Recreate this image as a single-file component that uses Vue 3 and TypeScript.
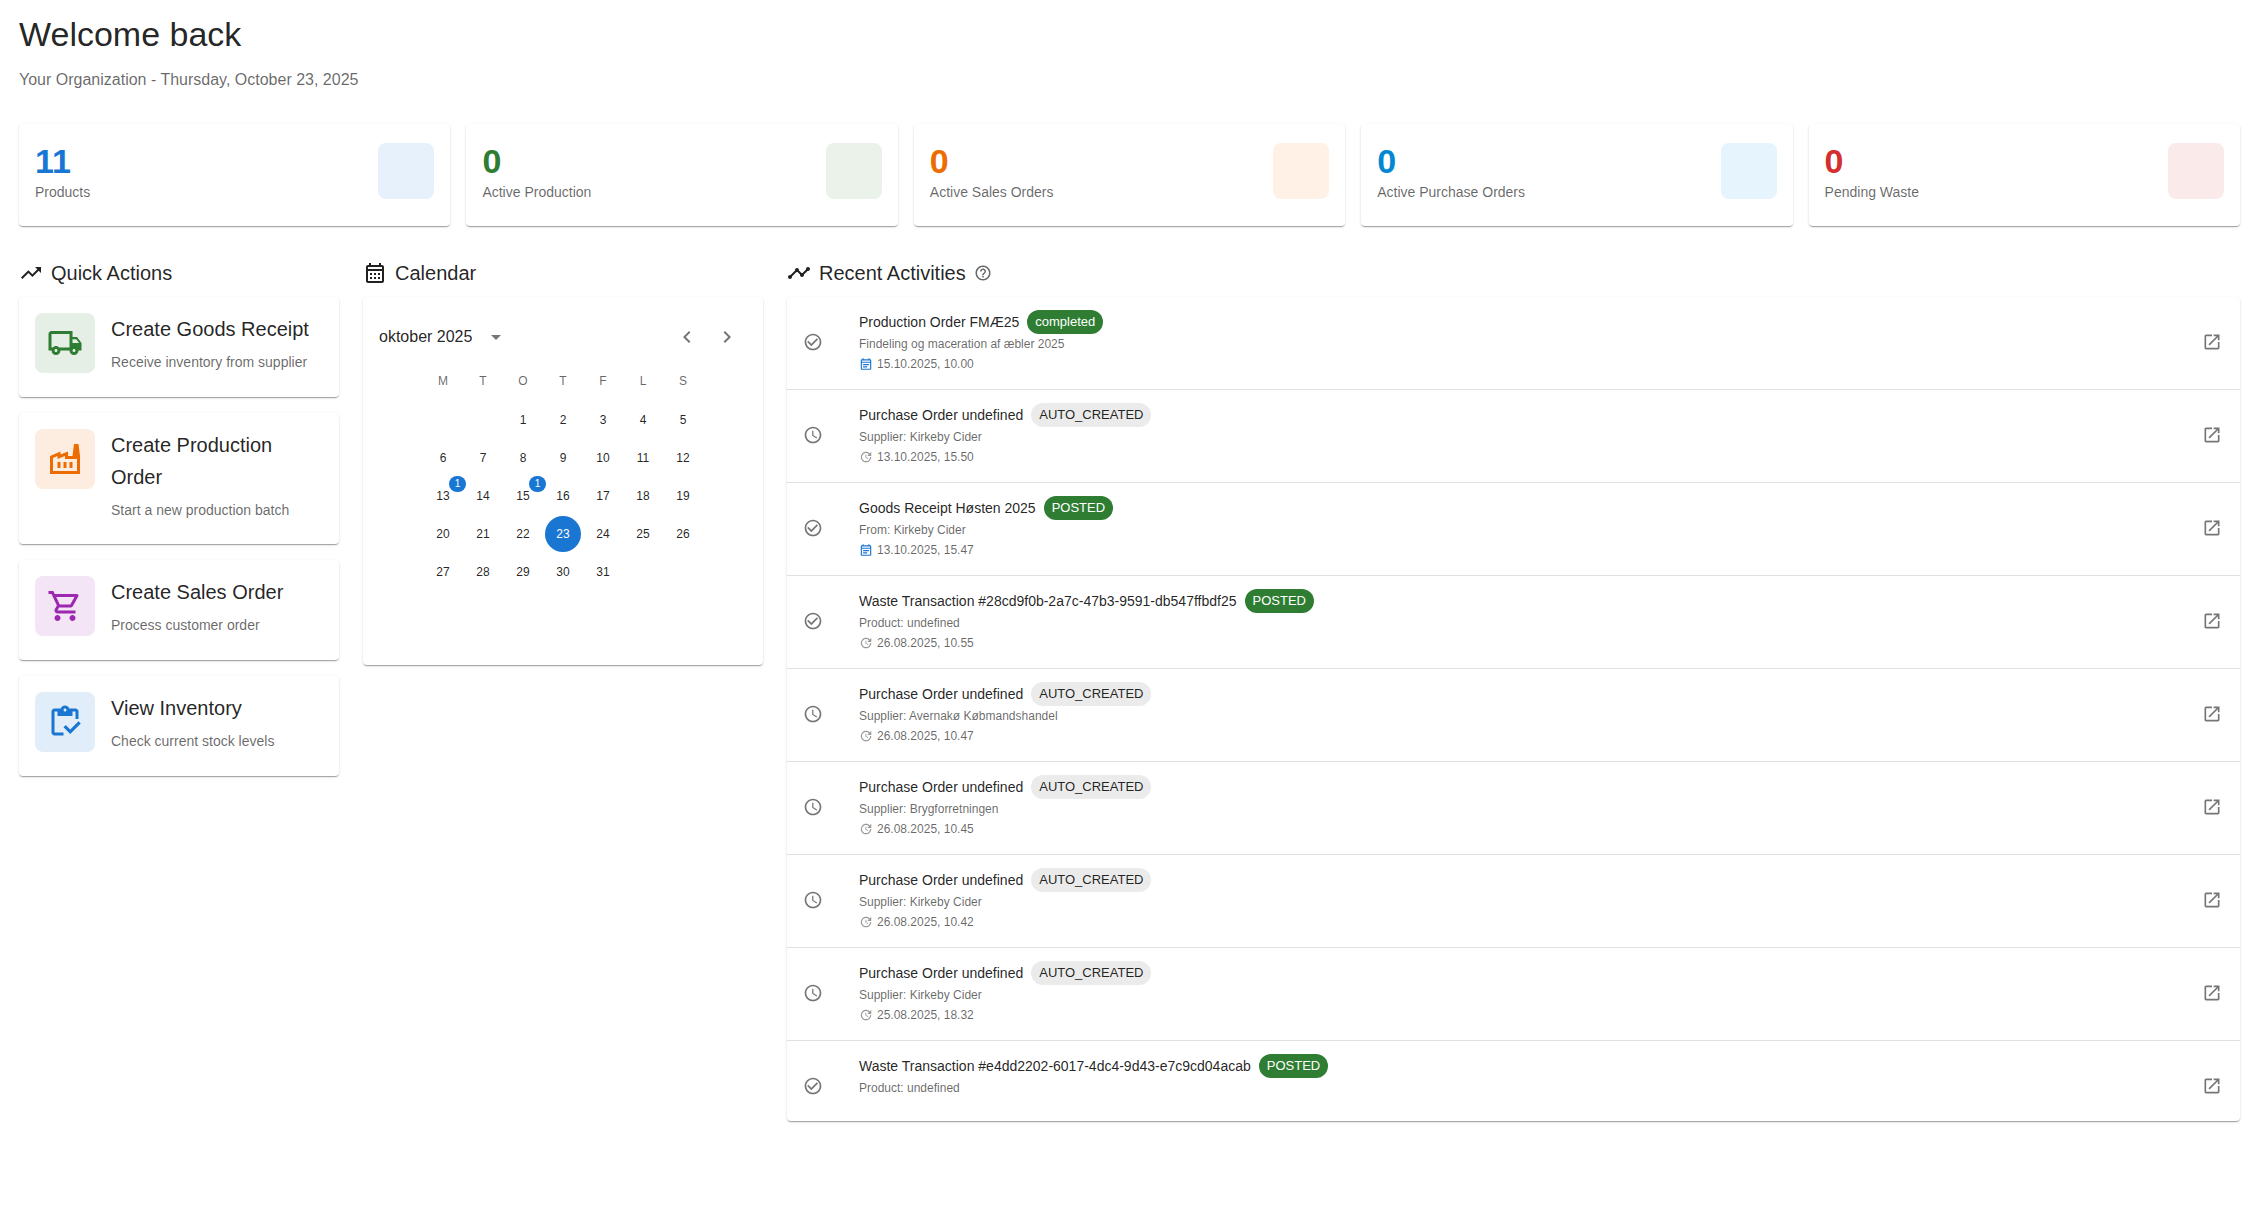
<script setup lang="ts">
interface Stat { value: number; label: string; tone: string }
interface Action { title: string; text: string; tone: string; icon: string }
interface Activity {
  title: string
  status: string
  detail: string
  date?: string
  scheduled?: boolean
}

const icons: Record<string, string> = {
  trending: 'm16 6 2.29 2.29-4.88 4.88-4-4L2 16.59 3.41 18l6-6 4 4 6.3-6.29L22 12V6z',
  calendar: 'M19 4h-1V2h-2v2H8V2H6v2H5c-1.11 0-1.99.9-1.99 2L3 20c0 1.1.89 2 2 2h14c1.1 0 2-.9 2-2V6c0-1.1-.9-2-2-2zm0 16H5V10h14v10zm0-12H5V6h14v2zM9 14H7v-2h2v2zm4 0h-2v-2h2v2zm4 0h-2v-2h2v2zm-8 4H7v-2h2v2zm4 0h-2v-2h2v2zm4 0h-2v-2h2v2z',
  timeline: 'M23 8c0 1.1-.9 2-2 2-.18 0-.35-.02-.51-.07l-3.56 3.55c.05.16.07.34.07.52 0 1.1-.9 2-2 2s-2-.9-2-2c0-.18.02-.36.07-.52l-2.55-2.55c-.16.05-.34.07-.52.07s-.36-.02-.52-.07l-4.55 4.56c.05.16.07.33.07.51 0 1.1-.9 2-2 2s-2-.9-2-2 .9-2 2-2c.18 0 .35.02.51.07l4.56-4.55C8.02 9.36 8 9.18 8 9c0-1.1.9-2 2-2s2 .9 2 2c0 .18-.02.36-.07.52l2.55 2.55c.16-.05.34-.07.52-.07s.36.02.52.07l3.55-3.56C19.02 8.35 19 8.18 19 8c0-1.1.9-2 2-2s2 .9 2 2z',
  help: 'M11 18h2v-2h-2v2zm1-16C6.48 2 2 6.48 2 12s4.48 10 10 10 10-4.48 10-10S17.52 2 12 2zm0 18c-4.41 0-8-3.59-8-8s3.59-8 8-8 8 3.59 8 8-3.59 8-8 8zm0-14c-2.21 0-4 1.79-4 4h2c0-1.1.9-2 2-2s2 .9 2 2c0 2-3 1.75-3 5h2c0-2.25 3-2.5 3-5 0-2.21-1.79-4-4-4z',
  check: 'M16.59 7.58 10 14.17l-3.59-3.58L5 12l5 5 8-8zM12 2C6.48 2 2 6.48 2 12s4.48 10 10 10 10-4.48 10-10S17.52 2 12 2m0 18c-4.42 0-8-3.58-8-8s3.58-8 8-8 8 3.58 8 8-3.58 8-8 8',
  clock: 'M11.99 2C6.47 2 2 6.48 2 12s4.47 10 9.99 10C17.52 22 22 17.52 22 12S17.52 2 11.99 2zM12 20c-4.42 0-8-3.58-8-8s3.58-8 8-8 8 3.58 8 8-3.58 8-8 8zm.5-13H11v6l5.25 3.15.75-1.23-4.5-2.67z',
  open: 'M19 19H5V5h7V3H5c-1.11 0-2 .9-2 2v14c0 1.1.89 2 2 2h14c1.1 0 2-.9 2-2v-7h-2zM14 3v2h3.59l-9.83 9.83 1.41 1.41L19 6.41V10h2V3z',
  truck: 'M20 8h-3V4H3c-1.1 0-2 .9-2 2v11h2c0 1.66 1.34 3 3 3s3-1.34 3-3h6c0 1.66 1.34 3 3 3s3-1.34 3-3h2v-5l-3-4zm-.5 1.5 1.96 2.5H17V9.5h2.5zM6 18c-.55 0-1-.45-1-1s.45-1 1-1 1 .45 1 1-.45 1-1 1zm2.22-3c-.55-.61-1.33-1-2.22-1s-1.67.39-2.22 1H3V6h12v9H8.22zM18 18c-.55 0-1-.45-1-1s.45-1 1-1 1 .45 1 1-.45 1-1 1z',
  factory: 'M22 22H2V10l7-3v2l5-2v3h3l1-8h3l1 8v12zM12 9.95l-5 2V10l-3 1.32V20h16v-8h-8V9.95zM11 18h2v-4h-2v4zm-4 0h2v-4H7v4zm10-4h-2v4h2v-4z',
  cart: 'M15.55 13c.75 0 1.41-.41 1.75-1.03l3.58-6.49c.37-.66-.11-1.48-.87-1.48H5.21l-.94-2H1v2h2l3.6 7.59-1.35 2.44C4.52 15.37 5.48 17 7 17h12v-2H7l1.1-2h7.45zM6.16 6h12.15l-2.76 5H8.53L6.16 6zM7 18c-1.1 0-1.99.9-1.99 2S5.9 22 7 22s2-.9 2-2-.9-2-2-2zm10 0c-1.1 0-1.99.9-1.99 2s.89 2 1.99 2 2-.9 2-2-.9-2-2-2z',
  inventory: 'M5 5h2v3h10V5h2v5h2V5c0-1.1-.9-2-2-2h-4.18C14.4 1.84 13.3 1 12 1s-2.4.84-2.82 2H5c-1.1 0-2 .9-2 2v14c0 1.1.9 2 2 2h6v-2H5V5zm7-2c.55 0 1 .45 1 1s-.45 1-1 1-1-.45-1-1 .45-1 1-1zM21 11.5 15.51 17l-3.01-3-1.5 1.5 4.51 4.5L22.5 13z',
  note: 'M19 4h-1V2h-2v2H8V2H6v2H5c-1.11 0-1.99.9-1.99 2L3 20c0 1.1.89 2 2 2h14c1.1 0 2-.9 2-2V6c0-1.1-.9-2-2-2zm0 16H5V10h14v10zm0-12H5V6h14v2zM7 12h10v2H7v-2zm0 4h7v2H7v-2z',
  update: 'M21 10.12h-6.78l2.74-2.82c-2.73-2.7-7.15-2.8-9.88-.1-2.73 2.71-2.73 7.08 0 9.79 2.73 2.71 7.15 2.71 9.88 0C18.32 15.65 19 14.08 19 12.1h2c0 1.98-.88 4.55-2.64 6.29-3.51 3.48-9.21 3.48-12.72 0-3.5-3.47-3.53-9.11-.02-12.58 3.51-3.47 9.14-3.47 12.65 0L21 3v7.12zM12.5 8v4.25l3.5 2.08-.72 1.21L11 13V8h1.5z',
  dropdown: 'M7 10l5 5 5-5z',
  left: 'M15.41 7.41 14 6l-6 6 6 6 1.41-1.41L10.83 12z',
  right: 'M8.59 16.59 13.17 12 8.59 7.41 10 6l6 6-6 6z',
}

const stats: Stat[] = [
  { value: 11, label: 'Products', tone: 'blue' },
  { value: 0, label: 'Active Production', tone: 'green' },
  { value: 0, label: 'Active Sales Orders', tone: 'orange' },
  { value: 0, label: 'Active Purchase Orders', tone: 'sky' },
  { value: 0, label: 'Pending Waste', tone: 'red' },
]

const actions: Action[] = [
  { title: 'Create Goods Receipt', text: 'Receive inventory from supplier', tone: 'green', icon: 'truck' },
  { title: 'Create Production Order', text: 'Start a new production batch', tone: 'orange', icon: 'factory' },
  { title: 'Create Sales Order', text: 'Process customer order', tone: 'purple', icon: 'cart' },
  { title: 'View Inventory', text: 'Check current stock levels', tone: 'blue', icon: 'inventory' },
]

const activities: Activity[] = [
  { title: 'Production Order FMÆ25', status: 'completed', detail: 'Findeling og maceration af æbler 2025', date: '15.10.2025, 10.00', scheduled: true },
  { title: 'Purchase Order undefined', status: 'AUTO_CREATED', detail: 'Supplier: Kirkeby Cider', date: '13.10.2025, 15.50' },
  { title: 'Goods Receipt Høsten 2025', status: 'POSTED', detail: 'From: Kirkeby Cider', date: '13.10.2025, 15.47', scheduled: true },
  { title: 'Waste Transaction #28cd9f0b-2a7c-47b3-9591-db547ffbdf25', status: 'POSTED', detail: 'Product: undefined', date: '26.08.2025, 10.55' },
  { title: 'Purchase Order undefined', status: 'AUTO_CREATED', detail: 'Supplier: Avernakø Købmandshandel', date: '26.08.2025, 10.47' },
  { title: 'Purchase Order undefined', status: 'AUTO_CREATED', detail: 'Supplier: Brygforretningen', date: '26.08.2025, 10.45' },
  { title: 'Purchase Order undefined', status: 'AUTO_CREATED', detail: 'Supplier: Kirkeby Cider', date: '26.08.2025, 10.42' },
  { title: 'Purchase Order undefined', status: 'AUTO_CREATED', detail: 'Supplier: Kirkeby Cider', date: '25.08.2025, 18.32' },
  { title: 'Waste Transaction #e4dd2202-6017-4dc4-9d43-e7c9cd04acab', status: 'POSTED', detail: 'Product: undefined' },
]

const weekdays = ['M', 'T', 'O', 'T', 'F', 'L', 'S']
const firstColumn = 2
const today = 23
const events: Record<number, number> = { 13: 1, 15: 1 }
const weeks: number[][] = Array.from({ length: 5 }, (_, w) =>
  Array.from({ length: 7 }, (_, d) => {
    const day = w * 7 + d - firstColumn + 1
    return day >= 1 && day <= 31 ? day : 0
  }),
)

const isDone = (a: Activity): boolean => a.status !== 'AUTO_CREATED'
</script>

<template>
  <main class="page">
    <h1>Welcome back</h1>
    <p class="subtitle">Your Organization - Thursday, October 23, 2025</p>

    <section class="stats">
      <div v-for="s in stats" :key="s.label" class="card stat" :class="s.tone">
        <div>
          <div class="stat-value">{{ s.value }}</div>
          <div class="small">{{ s.label }}</div>
        </div>
        <div class="stat-box"></div>
      </div>
    </section>

    <div class="columns">
      <section>
        <h2><svg class="i24" viewBox="0 0 24 24"><path :d="icons.trending" /></svg>Quick Actions</h2>
        <div class="actions">
          <button v-for="a in actions" :key="a.title" type="button" class="card action" :class="a.tone">
            <span class="action-icon"><svg class="i36" viewBox="0 0 24 24"><path :d="icons[a.icon]" /></svg></span>
            <span class="action-body">
              <span class="action-title">{{ a.title }}</span>
              <span class="small">{{ a.text }}</span>
            </span>
          </button>
        </div>
      </section>

      <section>
        <h2><svg class="i24" viewBox="0 0 24 24"><path :d="icons.calendar" /></svg>Calendar</h2>
        <div class="card calendar">
          <div class="cal-head">
            <button type="button" class="month">
              oktober 2025
              <svg class="i24" viewBox="0 0 24 24"><path :d="icons.dropdown" /></svg>
            </button>
            <div class="cal-nav">
              <button type="button" class="icon-button" aria-label="Previous month">
                <svg class="i24" viewBox="0 0 24 24"><path :d="icons.left" /></svg>
              </button>
              <button type="button" class="icon-button" aria-label="Next month">
                <svg class="i24" viewBox="0 0 24 24"><path :d="icons.right" /></svg>
              </button>
            </div>
          </div>
          <table>
            <thead>
              <tr><th v-for="(d, i) in weekdays" :key="i" scope="col">{{ d }}</th></tr>
            </thead>
            <tbody>
              <tr v-for="(week, w) in weeks" :key="w">
                <td v-for="(day, i) in week" :key="i">
                  <button v-if="day" type="button" class="day" :class="{ today: day === today }">
                    {{ day }}<span v-if="events[day]" class="badge">{{ events[day] }}</span>
                  </button>
                </td>
              </tr>
            </tbody>
          </table>
        </div>
      </section>

      <section>
        <h2>
          <svg class="i24" viewBox="0 0 24 24"><path :d="icons.timeline" /></svg>Recent Activities
          <svg class="i18 muted" viewBox="0 0 24 24"><path :d="icons.help" /></svg>
        </h2>
        <ul class="card list">
          <li v-for="(a, i) in activities" :key="i">
            <svg class="i20 state" viewBox="0 0 24 24"><path :d="isDone(a) ? icons.check : icons.clock" /></svg>
            <div class="entry">
              <div class="entry-head">
                <span class="entry-title">{{ a.title }}</span>
                <span class="chip" :class="{ done: isDone(a) }">{{ a.status }}</span>
              </div>
              <div class="caption">{{ a.detail }}</div>
              <div v-if="a.date" class="caption">
                <svg class="i14" :class="{ scheduled: a.scheduled }" viewBox="0 0 24 24">
                  <path :d="a.scheduled ? icons.note : icons.update" />
                </svg>
                {{ a.date }}
              </div>
            </div>
            <button type="button" class="icon-button open" :aria-label="'Open ' + a.title">
              <svg class="i20" viewBox="0 0 24 24"><path :d="icons.open" /></svg>
            </button>
          </li>
        </ul>
      </section>
    </div>
  </main>
</template>

<style>
body {
  margin: 0;
  background: #fff;
}
</style>

<style scoped>
* {
  box-sizing: border-box;
}
.page {
  padding: 13px 16px 24px 19px;
  font-family: "Liberation Sans", Arial, sans-serif;
  color: rgba(0, 0, 0, 0.87);
}
button {
  border: 0;
  padding: 0;
  background: none;
  font: inherit;
  color: inherit;
  text-align: left;
  cursor: pointer;
}
svg {
  display: block;
  flex: none;
  fill: currentColor;
}
.i14 { width: 14px; height: 14px; }
.i18 { width: 18px; height: 18px; }
.i20 { width: 20px; height: 20px; }
.i24 { width: 24px; height: 24px; }
.i36 { width: 36px; height: 36px; }
.muted { color: rgba(0, 0, 0, 0.6); }

h1 {
  margin: 0 0 13px;
  font-size: 34px;
  font-weight: 400;
  line-height: 42px;
}
.subtitle {
  margin: 0 0 32px;
  font-size: 16px;
  line-height: 24px;
  color: rgba(0, 0, 0, 0.6);
}
h2 {
  display: flex;
  align-items: center;
  gap: 8px;
  margin: 0 0 8px;
  font-size: 20px;
  font-weight: 400;
  line-height: 32px;
}
.card {
  background: #fff;
  border-radius: 4px;
  box-shadow: 0 2px 1px -1px rgba(0, 0, 0, 0.2), 0 1px 1px 0 rgba(0, 0, 0, 0.14), 0 1px 3px 0 rgba(0, 0, 0, 0.12);
}
.small {
  font-size: 14px;
  line-height: 20px;
  color: rgba(0, 0, 0, 0.6);
}

.blue { --tone: #1976d2; --soft: #e6f1fb; --tint: #e1eefa; }
.green { --tone: #2e7d32; --soft: #eaf2ea; --tint: #e5efe5; }
.orange { --tone: #ed6c02; --soft: #fff1e5; --tint: #fdede0; }
.sky { --tone: #0288d1; --soft: #e5f4fd; }
.red { --tone: #d32f2f; --soft: #fbeaea; }
.purple { --tone: #9c27b0; --tint: #f3e5f5; }

.stats {
  display: grid;
  grid-template-columns: repeat(5, 1fr);
  gap: 16px;
  margin-bottom: 31px;
}
.stat {
  display: flex;
  align-items: center;
  justify-content: space-between;
  padding: 16px 16px 24px;
}
.stat-value {
  font-size: 34px;
  font-weight: 700;
  line-height: 42px;
  color: var(--tone);
}
.stat-box {
  width: 56px;
  height: 56px;
  border-radius: 8px;
  background: var(--soft);
}

.columns {
  display: grid;
  grid-template-columns: 320px 400px minmax(0, 1fr);
  align-items: start;
  gap: 24px;
}
.actions {
  display: flex;
  flex-direction: column;
  gap: 16px;
}
.action {
  display: flex;
  align-items: flex-start;
  gap: 16px;
  padding: 16px 16px 24px;
}
.action-icon {
  display: flex;
  flex: none;
  align-items: center;
  justify-content: center;
  width: 60px;
  height: 60px;
  border-radius: 8px;
  background: var(--tint);
  color: var(--tone);
}
.action-body {
  display: flex;
  flex-direction: column;
  gap: 7px;
}
.action-title {
  font-size: 20px;
  line-height: 32px;
}

.calendar {
  min-height: 368px;
  padding: 20px 16px 16px;
}
.cal-head {
  display: flex;
  align-items: center;
  justify-content: space-between;
  height: 40px;
  margin-bottom: 4px;
}
.month {
  display: flex;
  align-items: center;
  gap: 12px;
  font-size: 16px;
  line-height: 24px;
}
.month svg {
  color: rgba(0, 0, 0, 0.54);
}
.cal-nav {
  display: flex;
}
.icon-button {
  flex: none;
  padding: 8px;
  color: rgba(0, 0, 0, 0.54);
}
table {
  margin: 0 auto;
  border-collapse: collapse;
  font-size: 12px;
}
th {
  width: 40px;
  height: 40px;
  padding: 0;
  font-weight: 400;
  color: rgba(0, 0, 0, 0.6);
}
td {
  height: 38px;
  padding: 0 2px;
}
.day {
  position: relative;
  display: block;
  width: 36px;
  height: 36px;
  border-radius: 50%;
  text-align: center;
}
.today {
  background: #1976d2;
  color: #fff;
}
.badge {
  position: absolute;
  top: -2px;
  right: -5px;
  width: 17px;
  height: 16px;
  border-radius: 8px;
  background: #1976d2;
  color: #fff;
  font-size: 10px;
  line-height: 16px;
}

.list {
  margin: 0;
  padding: 0;
  list-style: none;
}
li {
  display: flex;
  align-items: flex-start;
  min-height: 80px;
  padding: 13px 10px 15px 16px;
}
li:not(:last-child) {
  border-bottom: 1px solid #e0e0e0;
}
.state {
  margin: 22px 36px 0 0;
  color: rgba(0, 0, 0, 0.54);
}
.open {
  margin-top: 14px;
}
.entry {
  flex: 1;
  min-width: 0;
}
.entry-head {
  display: flex;
  align-items: center;
  gap: 8px;
}
.entry-title {
  font-size: 14px;
  line-height: 24px;
}
.chip {
  height: 24px;
  padding: 0 8px;
  border-radius: 12px;
  background: #ebebeb;
  font-size: 13px;
  line-height: 24px;
}
.chip.done {
  background: #2e7d32;
  color: #fff;
}
.caption {
  display: flex;
  align-items: center;
  gap: 4px;
  font-size: 12px;
  line-height: 20px;
  color: rgba(0, 0, 0, 0.6);
}
.caption svg {
  color: rgba(0, 0, 0, 0.4);
}
.caption .scheduled {
  color: #1976d2;
}
</style>
